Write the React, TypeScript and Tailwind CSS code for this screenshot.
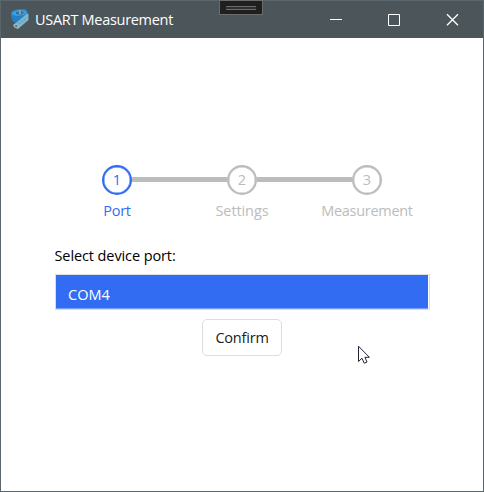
import React from "react";

const GRAY = "#bcbcbc";
const BLUE = "#326cf3";

function AppIcon() {
  return (
    <svg width="20" height="21" viewBox="0 0 20 21">
      <path d="M1 3 L4 1 L9 0 L15 0 L17.5 2 L18 7 L10 15 L6 15 L2 11 L1 7Z" fill="#2380c4" />
      <path d="M2 3.5 L5 2 L9 1 L15 1.5 L17 4 L14 6 L7 7 L3 6Z" fill="#3f9edb" />
      <path d="M6 3 L12 2 L14 4 L10 6 L6 5Z" fill="#3272a0" />
      <path d="M9 1 L11 1 L11 5 L9 6Z" fill="#8b9da5" />
      <path d="M17 4.5 L18.5 5 L18.5 11 L8 20 L4 18 L3.5 16Z" fill="#79b5cc" />
      <path d="M3 16 L6 14 L9 17 L8 19.5 L5 19Z" fill="#a6b0b4" />
      <path d="M5.5 16.5h1.5v1.2H5.5zM9 13.5l1.3 1.5M11.5 11.5l1.3 1.5M14 9.5l1.3 1.5" fill="#53646d" stroke="#467e9a" strokeWidth=".6" />
    </svg>
  );
}

function TitleBar() {
  return (
    <header className="relative flex h-[37px] shrink-0 items-center bg-[#4c555a] text-white">
      <div className="ml-[9px] mr-[5px] h-[21px] w-5">
        <AppIcon />
      </div>
      <span className="grow whitespace-nowrap text-[14.5px] leading-5 tracking-[-0.3px]">USART Measurement</span>
      <div className="absolute left-[218px] top-[-1px] flex h-[15px] w-[44px] items-center justify-center border border-[#6a6c6c] bg-[#1f1f1f]">
        <div className="h-1 w-[30px] border-y border-[#6a6a6a] bg-[#303030]" />
      </div>
      <svg className="mr-6 shrink-0" width="130" height="14" viewBox="0 0 130 14" fill="none" stroke="white">
        <path d="M1 6.5H13M59.5 1.5H70.5V12.5H59.5Z" />
        <path d="M118 1.2L129 12.2M129 1.2L118 12.2" strokeWidth="1.3" />
      </svg>
    </header>
  );
}

function Step({ n, label, active = false }: { n: number; label: string; active?: boolean }) {
  const color = active ? BLUE : GRAY;
  return (
    <div className="flex w-[125px] flex-col items-center" style={{ color }}>
      <div className="flex w-full items-center">
        <div className={n === 1 ? "h-[5px] grow" : "mb-px h-[5px] grow bg-[#bcbcbc]"} />
        <div className="flex h-[30px] w-[30px] items-center justify-center rounded-full border-2 pl-px text-[14.5px] shadow-[inset_0_0_0_0.4px_currentColor]" style={{ borderColor: color }}>
          {n}
        </div>
        <div className={n === 3 ? "h-[5px] grow" : "mb-px h-[5px] grow bg-[#bcbcbc]"} />
      </div>
      <span className={`mt-[6px] whitespace-nowrap pl-px text-[14.5px] leading-5 ${n === 2 ? "tracking-[-0.1px]" : "tracking-[-0.3px]"}`}>{label}</span>
    </div>
  );
}

function Cursor() {
  return (
    <svg className="absolute left-[356px] top-[344px]" width="14" height="20" viewBox="0 0 14 20">
      <path d="M1.5 1.2V16.4L5 13.2L7.2 18.2L10 17L7.9 12.3H12.4Z" fill="white" stroke="#252032" />
    </svg>
  );
}

export default function App() {
  return (
    <div className="relative flex h-[492px] w-[484px] flex-col border border-[#5a666b] bg-white font-['Open_Sans','Noto_Sans',sans-serif] text-black">
      <TitleBar />
      <main className="flex grow flex-col pt-[127px]">
        <div className="ml-[53px] flex">
          <Step n={1} label="Port" active />
          <Step n={2} label="Settings" />
          <Step n={3} label="Measurement" />
        </div>
        <label className="ml-[53.5px] mt-[25px] text-[14.5px] leading-5 tracking-[-0.1px]">Select device port:</label>
        <div className="ml-[54px] mt-2 h-9 w-[375px] border border-[#dddddd] pr-px">
          <div className="flex h-[34px] items-center border-b border-[#78a0f7] bg-[#326cf3] pl-3 pt-[7px] text-[14.5px] leading-5 tracking-[0.05px] text-white">COM4</div>
        </div>
        <button className="ml-[201px] mt-[9px] h-[37px] w-20 rounded-[5px] border border-[#dddddd] bg-white text-[14.5px] tracking-[-0.2px] text-[#202020]">Confirm</button>
      </main>
      <Cursor />
    </div>
  );
}
